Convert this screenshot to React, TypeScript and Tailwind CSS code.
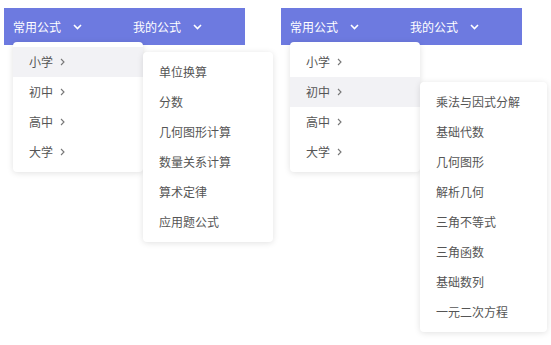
import React from "react";

const font = { fontFamily: '"Noto Sans CJK SC", "Noto Sans", sans-serif' };

function Down() {
  return (
    <svg width="9" height="6" viewBox="0 0 9 6" className="ml-[12px]">
      <polyline points="1,1 4.5,4.5 8,1" fill="none" stroke="white" strokeWidth="1.6" />
    </svg>
  );
}

function Right() {
  return (
    <svg width="5" height="8" viewBox="0 0 5 8" className="ml-[7px]">
      <polyline points="1,1 4,4 1,7" fill="none" stroke="#777" strokeWidth="1.1" />
    </svg>
  );
}

function Panel({ active, subItems, subTop, subWidth }: { active: number; subItems: string[]; subTop: string; subWidth: string }) {
  const levels = ["小学", "初中", "高中", "大学"];
  return (
    <div className="relative w-[241px] shrink-0">
      <div className="flex h-[37px] items-center bg-[#6d7ae0] pl-[9px] text-[12px] text-white">
        <div className="flex w-[120px] items-center">
          <span>常用公式</span>
          <Down />
        </div>
        <div className="flex items-center">
          <span>我的公式</span>
          <Down />
        </div>
      </div>
      <div className="absolute left-[9px] top-[34px] w-[130px] rounded-[4px] bg-white py-[5px] shadow-[0_1px_6px_rgba(0,0,0,0.12)]">
        {levels.map((l, i) => (
          <div
            key={l}
            className={`flex h-[30px] items-center pl-[16px] text-[12px] text-[#555] ${i === active ? "bg-[#f2f2f5]" : ""}`}
          >
            <span>{l}</span>
            <Right />
          </div>
        ))}
      </div>
      <div className={`absolute left-[139px] ${subTop} ${subWidth} rounded-[4px] bg-white py-[5px] shadow-[0_1px_6px_rgba(0,0,0,0.12)]`}>
        {subItems.map((s) => (
          <div key={s} className="flex h-[30px] items-center pl-[16px] text-[12px] text-[#555]">
            {s}
          </div>
        ))}
      </div>
    </div>
  );
}

export default function App() {
  return (
    <div className="h-[345px] w-[551px] overflow-hidden bg-white pt-[8px]" style={font}>
      <div className="flex pl-[4px] gap-[36px]">
        <Panel
          active={0}
          subItems={["单位换算", "分数", "几何图形计算", "数量关系计算", "算术定律", "应用题公式"]}
          subTop="top-[44px]"
          subWidth="w-[130px]"
        />
        <Panel
          active={1}
          subItems={["乘法与因式分解", "基础代数", "几何图形", "解析几何", "三角不等式", "三角函数", "基础数列", "一元二次方程"]}
          subTop="top-[74px]"
          subWidth="w-[127px]"
        />
      </div>
    </div>
  );
}
